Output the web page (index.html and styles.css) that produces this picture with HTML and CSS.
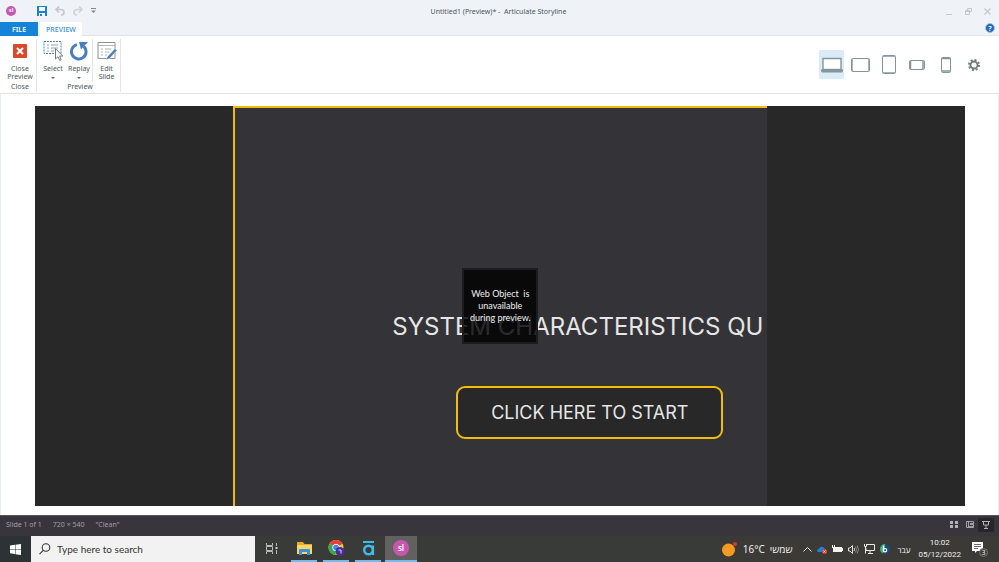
FILE: index.html
```html
<!DOCTYPE html>
<html lang="en">
<head>
  <meta charset="UTF-8" />
  <meta name="viewport" content="width=device-width, initial-scale=1.0" />
  <title>Untitled1 (Preview)* - Articulate Storyline</title>
  <link rel="stylesheet" href="styles.css">
</head>
<body>
  <header class="titlebar">
    <div class="quick">
      <span class="badge">sl</span>
      <button class="save" aria-label="Save"><svg width="10" height="10" viewBox="0 0 10 10"><path d="M0 0h10v10H0z" fill="#1583d8"/><path d="M2 1h6v4H2zM2 7h6v3H2z" fill="#fff"/><path d="M3 8h2v2H3z" fill="#1583d8"/></svg></button>
      <button aria-label="Undo"><svg width="10" height="10" viewBox="0 0 10 10" fill="none" stroke="#c3c7ca" stroke-width="1.6"><path d="M4 .5L1 3.500l3 3M1 3.500h5c4 0 4 5.500 0 5.500"/></svg></button>
      <button aria-label="Redo"><svg width="10" height="10" viewBox="0 0 10 10" fill="none" stroke="#d0d3d6" stroke-width="1.6"><path d="M6 .5L9 3.500l-3 3M9 3.500H4c-4 0-4 5.500 0 5.500"/></svg></button>
      <button aria-label="Customize"><svg width="5" height="6" viewBox="0 0 5 6"><path d="M0 0h5v1H0zM0 2.500h5L2.500 5z" fill="#85898d"/></svg></button>
    </div>
    <h1>Untitled1 (Preview)* -&nbsp; Articulate Storyline</h1>
    <div class="window-buttons">
      <button aria-label="Minimize"><svg width="7" height="7" viewBox="0 0 7 7"><path d="M0 6h6v1H0z" fill="#c4c8ca"/></svg></button>
      <button aria-label="Restore"><svg width="7" height="7" viewBox="0 0 7 7" fill="none" stroke="#c4c8ca"><path d="M2.500 2V.5h4v3H5M.5 2.500h4v4h-4zM.5 3.500h4"/></svg></button>
      <button aria-label="Close"><svg width="7" height="7" viewBox="0 0 7 7" fill="none" stroke="#c4c8ca" stroke-width="1.200"><path d="M.5.5l6 6M6.500.5l-6 6"/></svg></button>
    </div>
  </header>

  <nav class="tabs">
    <button class="tab file">FILE</button>
    <button class="tab active">PREVIEW</button>
    <button class="help" aria-label="Help">?</button>
  </nav>

  <section class="ribbon">
    <div class="group close-group">
      <div class="tools">
        <button class="tool">
          <svg width="20" height="20" viewBox="0 0 20 20"><rect x="3" y="3" width="14" height="14" rx="1" fill="#d94a2b"/><path d="M7 7l6 6M13 7l-6 6" stroke="#fff" stroke-width="2"/></svg>
          <span>Close<br>Preview</span>
        </button>
      </div>
      <div class="group-name">Close</div>
    </div>
    <div class="group">
      <div class="tools">
        <button class="tool">
          <svg width="20" height="20" viewBox="0 0 20 20" fill="none"><path d="M1 .5h17v12H1z" stroke="#4a7eb8" stroke-dasharray="2 1"/><path d="M4 4h2M8 4h7M4 7h2M8 7h7M4 10h2M8 10h3" stroke="#8fa1b2"/><path d="M12.500 7.500v10.500l2.500-2.300 1.700 3.800 1.500-.7-1.600-3.700h3.200z" fill="#fff" stroke="#75797d"/></svg>
          <span>Select</span><i class="caret"></i>
        </button>
        <button class="tool">
          <svg width="20" height="20" viewBox="0 0 20 20" fill="none"><path d="M8 3.600A7.300 7.300 0 1 0 14.800 5.400" stroke="#487eb9" stroke-width="3"/><path d="M10 1h9l-2.500 2.500-4.500 5z" fill="#487eb9"/></svg>
          <span>Replay</span><i class="caret"></i>
        </button>
        <button class="tool edit">
          <svg width="20" height="20" viewBox="0 0 20 20" fill="none"><path d="M1 1.500h17v16H1z" fill="#fff" stroke="#8d9297"/><path d="M1 4.500h17M4 8h2M8 8h6M4 11h2M8 11h4M4 14h2M8 14h2" stroke="#b0b5b9"/><path d="M9 19l1.500-3.500 7.500-8 2 2-7.500 8z" fill="#487eb9" stroke="#fff" stroke-width=".5"/></svg>
          <span>Edit<br>Slide</span>
        </button>
      </div>
      <div class="group-name">Preview</div>
    </div>
    <div class="devices">
      <button class="device selected" aria-label="Desktop"><svg width="22" height="16" viewBox="0 0 22 16"><rect x="2" y="1.500" width="18" height="11" fill="#fff" stroke="#84959a" stroke-width="1.400"/><path d="M0 12.500h22v1.500l-1 1.500H1L0 14z" fill="#84959a"/></svg></button>
      <button class="device" aria-label="Tablet landscape"><svg width="19" height="14" viewBox="0 0 19 14" fill="none" stroke="#84959a"><rect x=".5" y=".5" width="18" height="13" rx="1"/><path d="M1.500 1v12M17.500 1v12" stroke="#a5b1b5"/></svg></button>
      <button class="device" aria-label="Tablet portrait"><svg width="14" height="19" viewBox="0 0 14 19" fill="none" stroke="#84959a"><rect x=".5" y=".5" width="13" height="18" rx="1"/><path d="M1 1.500h12M1 17.500h12" stroke="#a5b1b5"/></svg></button>
      <button class="device" aria-label="Phone landscape"><svg width="16" height="10" viewBox="0 0 16 10" fill="none" stroke="#84959a"><rect x=".5" y=".5" width="15" height="9" rx="1"/><path d="M1.500 1v8M14 1v8" stroke-width="1.500"/></svg></button>
      <button class="device" aria-label="Phone portrait"><svg width="10" height="16" viewBox="0 0 10 16" fill="none" stroke="#84959a"><rect x=".5" y=".5" width="9" height="15" rx="1"/><path d="M1 1.500h8M1 14h8" stroke-width="1.500"/></svg></button>
      <button class="device" aria-label="Settings"><svg width="12" height="12" viewBox="0 0 12 12" fill="none" stroke="#6d7b80"><circle cx="6" cy="6" r="3.500" stroke-width="1.800"/><circle cx="6" cy="6" r="5" stroke-width="2" stroke-dasharray="1.960 1.960"/></svg></button>
    </div>
  </section>

  <main class="workspace">
    <div class="player">
      <div class="stage">
        <h2>SYSTEM CHARACTERISTICS QU</h2>
        <button class="start">CLICK HERE TO START</button>
        <div class="web-object">Web Object&nbsp; is<br>unavailable<br>during preview.</div>
      </div>
    </div>
  </main>

  <footer class="status">
    <span>Slide 1 of 1</span>
    <span>720 × 540</span>
    <span>"Clean"</span>
    <div class="views">
      <button aria-label="Story view"><svg width="8" height="7" viewBox="0 0 8 7"><path d="M0 0h3v3H0zM5 0h3v3H5zM0 4h3v3H0zM5 4h3v3H5z" fill="#b5b1b7"/></svg></button>
      <button aria-label="Slide view"><svg width="8" height="7" viewBox="0 0 8 7" fill="none" stroke="#a5a1a7"><path d="M.5.5h7v6h-7zM2.500 0v7M3 5.500h4"/><path d="M4 2h3v2H4z" fill="#a5a1a7" stroke="none"/></svg></button>
      <button class="current" aria-label="Preview"><svg width="8" height="8" viewBox="0 0 8 8" fill="none" stroke="#b5b1b7"><path d="M0 .5h8M1.500 1v3h5V1M4 4v3M2 7.500h4"/></svg></button>
    </div>
  </footer>

  <div class="taskbar">
    <button class="windows" aria-label="Start"><svg width="11" height="11" viewBox="0 0 11 11"><path d="M0 1.500l5-.7V5H0zM5.500.7L11 0v5H5.500zM0 5.600h5v4.300l-5-.7zM5.500 5.600H11V11l-5.500-.8z" fill="#fff"/></svg></button>
    <label class="search">
      <svg width="12" height="12" viewBox="0 0 12 12" fill="none" stroke="#333" stroke-width="1.100"><circle cx="7" cy="4.500" r="3.800"/><path d="M4.300 7.300L.5 11.200"/></svg>
      <input type="text" placeholder="Type here to search" aria-label="Type here to search">
    </label>
    <div class="apps">
      <button class="app" aria-label="Task view"><svg width="12" height="11" viewBox="0 0 12 11" fill="none" stroke="#b8bab7"><path d="M.5 0v2.500h6V0M.5 11V8.500h6V11M.5 3.500h6v4h-6zM10.500 0v3M10.500 7v4"/><path d="M9.500 4h2v2h-2z" fill="#d0d2cf" stroke="none"/></svg></button>
      <button class="app open" aria-label="File Explorer"><svg width="15" height="13" viewBox="0 0 15 13"><path d="M0 0h6l1.500 2H15v10H0z" fill="#e8aa2c"/><path d="M0 3h15v9H0z" fill="#fcd66b"/><path d="M2 13V8q0-1 1-1h9q1 0 1 1v5h-3v-3H5v3z" fill="#3d91d4"/></svg></button>
      <button class="app open" aria-label="Chrome"><svg width="17" height="16" viewBox="0 0 17 16"><circle cx="8" cy="7.500" r="7.500" fill="#fcc934"/><path d="M8 7.500L1.500 3.700A7.500 7.500 0 0 1 14.500 3.700z" fill="#e94235"/><path d="M8 7.500L1.500 3.700A7.500 7.500 0 0 0 7.500 15z" fill="#34a853"/><circle cx="8" cy="7.500" r="3.600" fill="#fff"/><circle cx="8" cy="7.500" r="2.800" fill="#4285f4"/><circle cx="12" cy="11.500" r="4.500" fill="#4a2ba0"/><path d="M10.500 10h2.500v3.500" fill="none" stroke="#fff" stroke-width=".8"/></svg></button>
      <button class="app open" aria-label="Articulate"><svg width="13" height="15" viewBox="0 0 13 15" fill="none" stroke="#40bce8"><path d="M1 1h11" stroke-width="2"/><circle cx="6.500" cy="9" r="4.300" stroke-width="2.400"/><path d="M11 4.500V14" stroke-width="2.200"/></svg></button>
      <button class="app open focused" aria-label="Storyline"><span class="badge large">sl</span></button>
    </div>
    <div class="tray">
      <div class="weather">
        <svg width="15" height="15" viewBox="0 0 15 15"><circle cx="6.500" cy="8" r="6.500" fill="#f69a21"/><circle cx="13" cy="2" r="2" fill="#d83a2b"/></svg>
        <span>16°C</span><span lang="he">שמשי</span>
      </div>
      <svg width="9" height="5" viewBox="0 0 9 5" fill="none" stroke="#e8e8e6"><path d="M.5 4.500l4-4 4 4"/></svg>
      <svg width="10" height="9" viewBox="0 0 10 9"><path d="M0 6q0-2 2-2 1-3 4-2l4 4v1H1z" fill="#1685de"/><circle cx="7.500" cy="6.500" r="2.500" fill="#e34436"/><path d="M6.500 5.500l2 2M8.500 5.500l-2 2" stroke="#fff" stroke-width=".7"/></svg>
      <svg width="11" height="8" viewBox="0 0 11 8"><path d="M2 2h8v1h1v3h-1v1H2z" fill="#f2f2f0"/><path d="M.5 0v2M2.500 0v2M0 2.500h3M1.500 3v4" stroke="#f2f2f0" fill="none"/></svg>
      <svg width="11" height="9" viewBox="0 0 11 9" fill="none" stroke="#e0e0dd"><path d="M.5 3h1.500l2.500-2.500v8L2 6H.5z"/><path d="M6 3q1 1.500 0 3"/><path d="M7.500 1.500q2 3 0 6M9.200.5q2.500 4 0 8" stroke="#888883"/></svg>
      <svg width="11" height="10" viewBox="0 0 11 10" fill="none" stroke="#e8e8e6"><path d="M3 .5h7.500v6H2V4M6 7v2M4 9.500h5M.5 0v2.500h2V0M1.500 3v6.500"/></svg>
      <svg width="10" height="10" viewBox="0 0 10 10"><circle cx="5" cy="5" r="5" fill="#1b4b80"/><path d="M0 5A5 5 0 0 1 5 0v5L3 9.500A5 5 0 0 1 0 5z" fill="#45ae79"/><path d="M3.500 1.500v5" stroke="#fff" stroke-width="1.300"/><circle cx="5" cy="6.200" r="1.700" fill="none" stroke="#fff" stroke-width="1.200"/></svg>
      <span class="language" lang="he">עבר</span>
      <div class="clock">10:02<br>05/12/2022</div>
      <button class="notices" aria-label="Notifications"><svg width="16" height="16" viewBox="0 0 16 16"><path d="M0 1h11v9H5l-2 2v-2H0z" fill="#fff"/><path d="M2 3.500h7M2 5.500h7M2 7.500h4" stroke="#45443f" stroke-width=".8"/></svg><span>3</span></button>
    </div>
  </div>
</body>
</html>
```
FILE: styles.css
```css
* {
  box-sizing: border-box;
}

body {
  margin: 0;
  min-height: 100vh;
  display: flex;
  flex-direction: column;
  background-color: #fff;
  color: #4c565f;
  font-family: "Noto Sans", "Open Sans", sans-serif;
  font-size: 7px;
  line-height: 9px;
}

button {
  display: flex;
  align-items: center;
  justify-content: center;
  padding: 0;
  border: none;
  background: none;
  color: inherit;
  font: inherit;
}

svg {
  display: block;
  flex: none;
}

.titlebar {
  display: grid;
  grid-template-columns: 1fr auto 1fr;
  align-items: center;
  height: 22px;
  padding: 0 8px 0 6px;
  background-color: #eff3f7;
}

.titlebar h1 {
  margin: 0;
  font-size: 7px;
  font-weight: 400;
}

.quick {
  display: flex;
  align-items: center;
  gap: 8px;
}

.save {
  margin-left: 13px;
}

.badge {
  width: 10px;
  height: 10px;
  border-radius: 50%;
  background-color: #c558ae;
  color: #fff;
  font-size: 6px;
  font-weight: 600;
  line-height: 9px;
  text-align: center;
}

.badge.large {
  width: 16px;
  height: 16px;
  font-size: 8px;
  line-height: 15px;
}

.window-buttons {
  display: flex;
  justify-content: flex-end;
  gap: 12px;
}

.tabs {
  display: flex;
  height: 14px;
  padding-right: 4px;
  border-bottom: 1px solid #e2e5e8;
  background-color: #eff3f7;
}

.tab {
  width: 38px;
  height: 14px;
  font-weight: 600;
}

.file {
  background-color: #1583d8;
  color: #fff;
}

.tab.active {
  width: 42px;
  margin-left: 2px;
  background-color: #fff;
  color: #3791d6;
  font-weight: 500;
}

.help {
  width: 10px;
  height: 10px;
  margin: 1px 0 0 auto;
  border: 1px solid #a9c3e2;
  border-radius: 50%;
  background-color: #2268bb;
  color: #fff;
  font-weight: 700;
}

.ribbon {
  display: flex;
  height: 58px;
  padding: 3px 4px 0 4px;
  border-bottom: 1px solid #e2e4e6;
}

.group {
  display: flex;
  flex-direction: column;
  height: 53px;
  padding-left: 3px;
  border-right: 1px solid #e4e6e8;
}

.close-group {
  padding: 0 1px;
}

.tools {
  display: flex;
  height: 43px;
}

.tool {
  flex-direction: column;
  justify-content: flex-start;
  width: 26px;
  padding-top: 2px;
  line-height: 8px;
}

.close-group .tool {
  width: 30px;
}

.tool span {
  padding-top: 4px;
}

.tool.edit {
  width: 28px;
  border-left: 1px solid #e4e6e8;
}

.caret {
  margin-top: 4px;
  border: 2px solid transparent;
  border-top-color: #666;
  border-bottom: none;
}

.group-name {
  text-align: center;
}

.devices {
  display: flex;
  justify-content: space-between;
  width: 176px;
  margin-left: auto;
  padding: 11px 8px 0 0;
}

.device {
  width: 25px;
  height: 29px;
  border-radius: 2px;
}

.device.selected {
  background-color: #d9eaf8;
}

.workspace {
  flex: 1;
  display: flex;
  padding: 12px 33px 9px 34px;
  border-left: 1px solid #e6eff6;
  border-right: 1px solid #e6eff6;
}

.player {
  flex: 1;
  display: flex;
  justify-content: center;
  background-color: #282828;
}

.stage {
  position: relative;
  height: 400px;
  aspect-ratio: 4 / 3;
  padding: 204px 0 0 157px;
  border-top: 2px solid #f1ba09;
  border-left: 2px solid #f1ba09;
  background-color: #343337;
  overflow: hidden;
  color: #e6e6e6;
  font-family: Inter, sans-serif;
}

.stage h2 {
  margin: 0;
  font-size: 24px;
  font-weight: 400;
  line-height: 30px;
  white-space: nowrap;
}

.start {
  width: 267px;
  height: 53px;
  margin: 44px 0 0 64px;
  border: 2px solid #f5bd07;
  border-radius: 9px;
  background-color: #282828;
  font-size: 18px;
  white-space: nowrap;
}

/* placeholder floats over the slide */
.web-object {
  position: absolute;
  top: 160px;
  left: 227px;
  width: 76px;
  height: 76px;
  padding-top: 18px;
  border: 2px solid #1c1b1e;
  background-color: rgba(0, 0, 0, 0.82);
  color: #eee;
  font-family: Lato, sans-serif;
  font-size: 9px;
  line-height: 12px;
  text-align: center;
  white-space: nowrap;
}

.status {
  display: flex;
  align-items: center;
  gap: 11px;
  height: 21px;
  padding: 0 5px 3px 6px;
  border-top: 1px solid #57545b;
  background-color: #39353d;
  color: #a29ea6;
}

.views {
  display: flex;
  margin-left: auto;
}

.views button {
  width: 16px;
  height: 14px;
}

.views .current {
  background-color: #28252b;
}

.taskbar {
  display: flex;
  height: 26px;
  background-color: #393b39;
  color: #f0f0ee;
}

.windows {
  width: 31px;
  background-color: #2d3335;
}

.search {
  display: flex;
  align-items: center;
  gap: 6px;
  width: 224px;
  padding-left: 8px;
  background-color: #f2f2f2;
}

.search input {
  flex: 1;
  min-width: 0;
  padding: 0;
  border: none;
  background: none;
  font: 10px Lato, sans-serif;
}

.search input::placeholder {
  color: #333;
}

.apps {
  display: flex;
}

.app {
  width: 33px;
  border-bottom: 2px solid transparent;
}

.app.open {
  width: 26px;
  margin: 0 3px;
  border-color: #76b9ed;
}

.app.open.focused {
  width: 32px;
  margin: 0 0 0 1px;
  background-color: #61625f;
}

.tray {
  display: flex;
  align-items: center;
  gap: 5px;
  margin-left: auto;
  padding-right: 11px;
  background-color: #3b3a36;
}

.weather {
  display: flex;
  align-items: center;
  gap: 5px;
  padding-right: 5px;
  font-size: 10px;
}

.weather svg {
  margin-right: 1px;
}

.language {
  padding: 0 3px;
  font-size: 8px;
}

.clock {
  font-family: Roboto, sans-serif;
  font-size: 8px;
  line-height: 12px;
  text-align: center;
}

.notices {
  position: relative;
  margin-left: 6px;
}

.notices span {
  position: absolute;
  right: 0;
  bottom: 0;
  width: 9px;
  height: 9px;
  border: 1px solid #777;
  border-radius: 50%;
  background-color: #3b3a36;
  font-size: 7px;
  line-height: 7px;
}
```
